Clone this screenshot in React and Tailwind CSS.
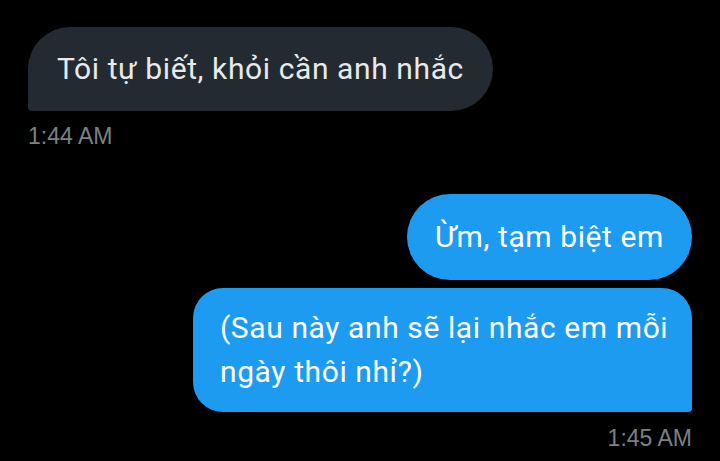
export default function App() {
  return (
    <div
      className="flex h-[461px] w-full flex-col overflow-hidden bg-black px-[28px] pt-[27px]"
      style={{ fontFamily: "Roboto, 'Noto Sans', sans-serif" }}
    >
      <div className="self-start rounded-[42px] rounded-bl-[4px] bg-[#232a31] px-[29px] py-[20px] text-[30px] leading-[44px] tracking-[0.6px] text-[#e7e9ea]">
        Tôi tự biết, khỏi cần anh nhắc
      </div>
      <p className="mt-[13px] font-['Liberation_Sans',sans-serif] text-[23px] leading-[24px] text-[#7c8084]">
        1:44 AM
      </p>

      <div className="mt-[46px] self-end rounded-[43px] bg-[#1d9bf0] px-[28px] py-[21px] text-[30px] leading-[44px] tracking-[0.6px] text-white">
        Ừm, tạm biệt em
      </div>
      <div className="mt-[8px] w-[499px] self-end rounded-[30px] rounded-br-[4px] bg-[#1d9bf0] py-[18px] pl-[27px] pr-[20px] text-[30px] leading-[44px] tracking-[0.6px] text-white">
        (Sau này anh sẽ lại nhắc em mỗi ngày thôi nhỉ?)
      </div>
      <p className="mt-[14px] self-end font-['Liberation_Sans',sans-serif] text-[23px] leading-[24px] text-[#7c8084]">
        1:45 AM
      </p>
    </div>
  )
}
